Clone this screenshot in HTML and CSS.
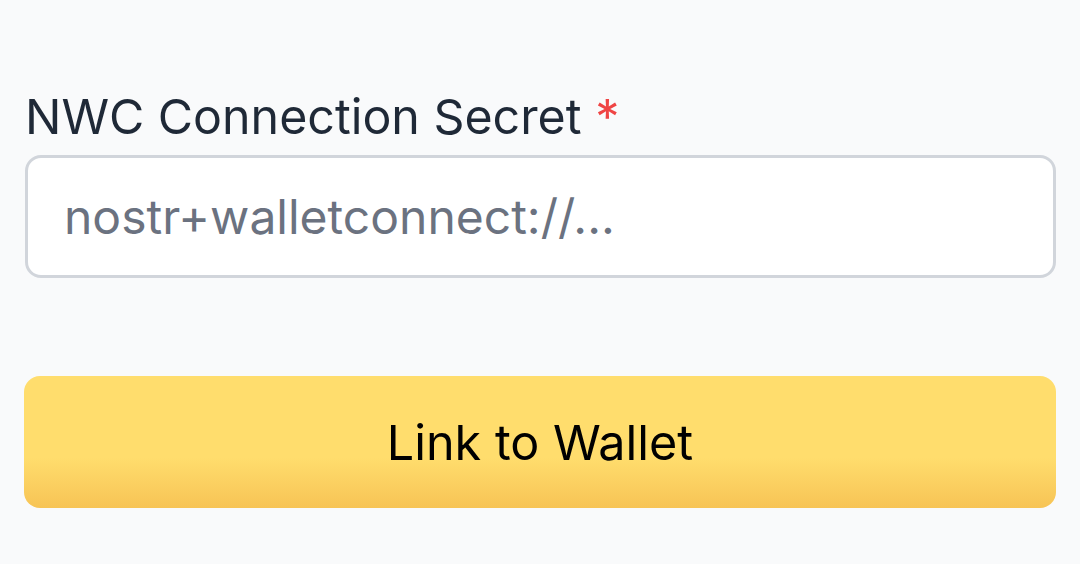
FILE: index.html
```html
<!DOCTYPE html>
<html lang="en">
<head>
<meta charset="utf-8">
<title>Link Wallet</title>
<link rel="stylesheet" href="styles.css">
</head>
<body>
<main class="form">
  <div class="field">
    <label class="label" for="nwc">NWC Connection Secret <span class="req">*</span></label>
    <input class="input" id="nwc" type="text" placeholder="nostr+walletconnect://...">
  </div>
  <button class="btn" type="button">Link to Wallet</button>
</main>
</body>
</html>
```
FILE: styles.css
```css
html, body {
  margin: 0;
  padding: 0;
  background: #f9fafb;
  height: 100%;
}
body {
  font-family: Inter, "Noto Sans", "Liberation Sans", sans-serif;
}
.form {
  padding: 87px 24px 0 24px;
  display: flex;
  flex-direction: column;
  gap: 98px;
}
.field {
  display: flex;
  flex-direction: column;
  gap: 8px;
}
.label {
  font-size: 48.3px;
  line-height: 60px;
  font-weight: 400;
  color: #1f2937;
  padding-left: 1px;
}
.req {
  color: #ef4444;
}
.input {
  box-sizing: border-box;
  height: 123px;
  margin: 0 24px 0 1px;
  width: calc(100% - 1px);
  border: 3px solid #d1d5db;
  border-radius: 16px;
  background: #ffffff;
  padding: 0 36px;
  font-family: inherit;
  font-size: 48px;
  color: #111827;
  outline: none;
}
.input::placeholder {
  color: #6b7280;
  opacity: 1;
}
.btn {
  box-sizing: border-box;
  height: 132px;
  border: none;
  border-radius: 16px;
  background: linear-gradient(to bottom, #ffdd6d 0%, #ffdd6d 62%, #f7c455 100%);
  font-family: inherit;
  font-size: 48.5px;
  font-weight: 400;
  color: #000000;
  cursor: pointer;
}
```
